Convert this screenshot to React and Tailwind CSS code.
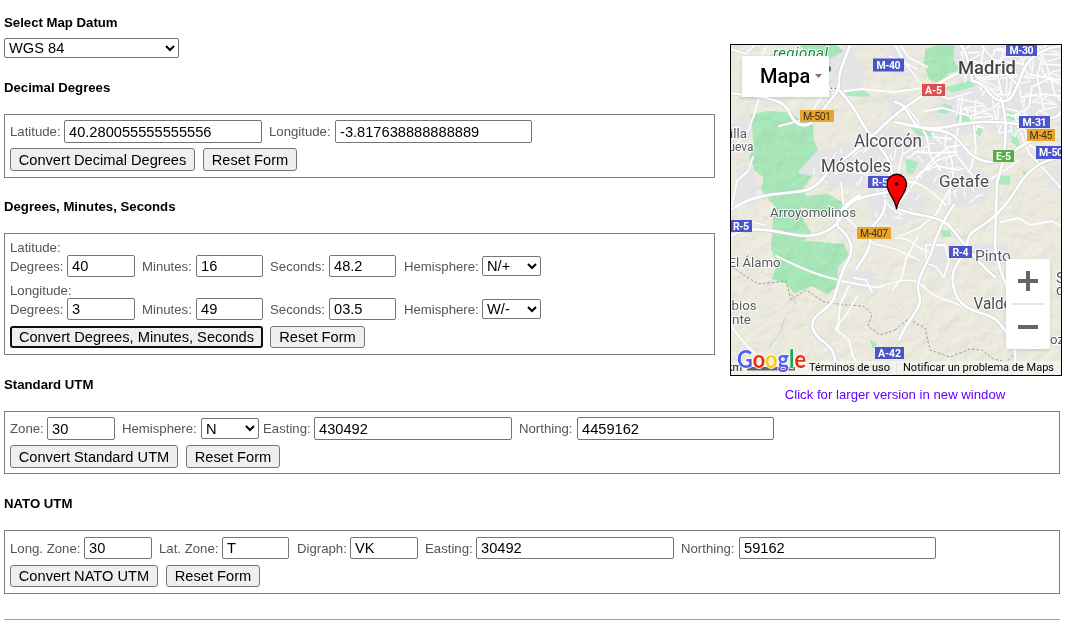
import React from "react";

const Heading = ({ children, className }) => (
  <h3 className={`text-[13.2px] leading-4 font-bold text-black ${className}`}>{children}</h3>
);

const Label = ({ children, className }) => (
  <label className={`shrink-0 whitespace-nowrap text-[13.2px] text-[#555555] ${className}`}>{children}</label>
);

const Field = ({ value, className }) => (
  <input
    defaultValue={value}
    className={`shrink-0 rounded-[2px] border border-[#767676] bg-white px-1 text-[14.65px] leading-4 text-black outline-none ${className}`}
  />
);

const Select = ({ value, className }) => (
  <select
    defaultValue={value}
    className={`shrink-0 rounded-[2px] border border-[#767676] bg-white text-[14.65px] leading-4 text-black outline-none ${className}`}
  >
    <option>{value}</option>
  </select>
);

const Button = ({ children, className }) => (
  <button className={`flex items-center justify-center whitespace-nowrap rounded-[3px] bg-[#efefef] text-[14.65px] leading-4 text-black ${className}`}>
    {children}
  </button>
);

const plain = "border border-[#767676]";

const urban = [
  "M956 45H1061V112L1040 118 1032 132 1012 138 985 128 965 134 945 126 930 112 950 92 965 75 955 60Z",
  "M858 135 880 128 908 134 922 148 912 162 880 160 860 152Z",
  "M818 152 850 146 880 160 888 175 870 186 840 186 820 176 800 172Z",
  "M915 130 945 128 960 142 968 165 955 185 930 190 912 172Z",
  "M870 192 900 185 925 198 918 215 900 225 880 222 868 208Z",
  "M940 170 970 168 995 180 980 202 955 206 940 190Z",
  "M892 48 905 55 915 68 900 76 885 64Z",
  "M830 60 850 50 864 75 856 92 838 96Z",
  "M925 245 942 243 950 262 945 276 928 265Z",
  "M845 280 870 270 876 286 860 293Z",
  "M738 170 752 165 756 200 738 205Z",
  "M1045 170 1061 164 1061 190 1050 186Z",
  "M975 245 1005 246 1005 262 990 264Z",
  "M735 120 750 117 750 135 735 138Z",
  "M888 100 905 96 908 110 893 115Z",
];

const parks = [
  "M750 116 767 112 788 113 802 122 812 125 813 140 819 155 813 173 803 187 805 197 828 195 842 203 846 213 825 216 800 205 803 222 810 232 803 242 822 243 843 245 848 255 837 267 837 285 828 293 812 285 795 292 787 283 773 278 778 265 772 248 773 235 775 205 762 190 765 177 755 170 750 157 755 147 753 127Z",
  "M926 50 940 45 958 45 966 56 961 68 948 73 941 83 930 79 925 63Z",
  "M800 45 836 45 846 57 830 60 815 57Z",
  "M848 90 865 91 870 96 856 96 846 95Z",
  "M945 88 970 81 974 86 953 92Z",
  "M975 125 982 130 980 136 974 132Z",
  "M958 115 970 114 974 121 957 121Z",
  "M1012 128 1019 142 1020 148 1012 142Z",
  "M910 126 925 127 935 136 918 135Z",
  "M1002 111 1016 114 1015 120 1003 117Z",
  "M906 159 918 163 912 174 907 172Z",
  "M941 230 950 231 951 236 943 237Z",
  "M1000 176 1010 176 1009 184 999 184Z",
  "M1023 171 1029 173 1025 178Z",
  "M870 340 877 344 873 348Z",
  "M944 104 952 107 947 113 938 112Z",
  "M826 65 831 68 828 72Z",
];

const major = [
  "M731 93C748 96 766 96 779 102S788 119 799 124 818 117 826 106 840 91 839 81 845 60 850 45",
  "M839 90C858 110 859 120 870 135S890 157 892 172 893 188 908 188",
  "M731 210C748 197 770 194 795 192S822 176 832 168 860 148 884 125 917 101 930 90 950 77 964 70",
  "M731 236C762 218 796 244 822 233S838 211 852 202 883 195 895 190",
  "M860 195C838 208 836 218 838 227 852 237 854 250 848 260S838 285 834 298 808 314 813 329 832 340 835 360 827 372 825 375",
  "M895 122C912 126 920 128 935 128S963 121 992 122 1020 127 1040 121 1055 119 1061 112",
  "M895 102C908 104 908 119 918 126S943 127 954 136 967 155 981 160 1000 161 1017 149 1041 139 1050 136",
  "M961 45C969 57 970 68 972 81 989 83 986 96 998 100S1013 96 1018 84 1025 62 1036 55 1053 47 1061 46",
  "M1001 98C1008 120 1007 155 997 182L995 245C998 278 1015 290 1014 331L1016 375",
  "M1061 158C1044 159 1033 167 1024 178S1009 205 990 220 970 229 967 245 950 264 953 284 967 309 984 314 1001 328 1013 340",
  "M895 208C922 219 940 213 953 230S980 265 995 277",
  "M954 205C943 220 936 236 932 250S914 280 919 294 908 317 899 340",
  "M885 200C888 218 867 225 870 236S862 259 856 270",
];

const minor = [
  "M731 150 748 131 754 115 760 95M731 49 745 54 755 45M767 45 762 55M822 96 807 119 779 126M832 93 861 89 894 92 930 87",
  "M776 256C795 265 815 276 852 283S872 288 895 282 920 285 931 293 955 300 974 312",
  "M835 170 861 173 880 180M841 183 845 216 863 234 875 244 895 249 919 260",
  "M731 209 737 181 748 171 753 157M731 326 746 345 758 357",
  "M895 184C914 175 931 190 946 205M898 174 902 155 918 145M898 205 919 176 934 158 949 147 967 144",
  "M899 236 918 229 936 214 949 190M895 238C913 236 916 251 931 252",
  "M891 171C878 190 883 207 902 214M905 105 917 120 927 137 930 155 940 170",
  "M947 129 945 145 952 161 953 177M958 129 954 151 963 164 973 176 988 182",
  "M924 111 943 108 970 116 993 108 1000 102M928 88 948 99 972 92",
  "M976 100 974 124 976 150 970 170M962 98 960 123M1021 133 1029 153 1061 188",
  "M1018 127 1015 115 1029 107 1032 87 1048 79 1061 83",
  "M1018 47 1027 74 1061 80M1035 45 1046 63 1055 94 1061 101M1022 97 1043 94 1061 96",
  "M982 46 1000 67 1018 85M963 68 994 60 1022 64M980 78 1007 74 1033 78",
  "M984 47 978 78 1000 98M1007 45 996 69 1002 96M1045 45 1037 77 1044 110",
  "M955 155 938 160 916 177M951 178 949 204M1001 222 1018 218 1030 225 1052 221 1061 226",
  "M893 290 902 277 906 259 918 236M740 228 752 222 764 225M835 329 846 315 857 297M835 329 849 340 853 357 863 369",
  "M849 286 840 305 838 330M1019 160 1007 169 991 179M1041 152 1029 145 1024 128",
  "M926 245 945 245 949 261 944 277 936 267 926 263ZM854 278 866 280 872 292",
  "M930 126 934 137 951 139M915 152 934 153 957 152M920 172 937 166 960 170",
  "M889 56 904 62 924 87M895 45 905 63 917 69M901 45 908 57 927 67",
];

const streets = Array.from({ length: 95 }, (_, i) => {
  const x = 956 + ((i * 37) % 108);
  const y = 42 + ((i * 53) % 103);
  const dx = 6 + ((i * 7) % 15);
  const dy = ((i * 11) % 25) - 12;
  return i % 3 ? `M${x} ${y}l${dx} ${dy / 2} ${dx / 2} ${dy / 3}` : `M${x} ${y}l${dy / 3} ${dx} ${dy / 4} ${dx / 2}`;
}).join("");

const suburbStreets = Array.from({ length: 120 }, (_, i) => {
  const x = 810 + ((i * 47) % 168);
  const y = 128 + ((i * 31) % 94);
  const dx = 5 + ((i * 5) % 9);
  const dy = ((i * 13) % 19) - 9;
  return i % 2 ? `M${x} ${y}l${dx} ${dy}` : `M${x} ${y}l${dy / 2} ${dx}`;
}).join("");

const shields = [
  [873, 58.5, 31, 13, "M-40", "#4a55cb", "#fff", 24],
  [1006, 44, 31, 12, "M-30", "#4a55cb", "#fff", 24],
  [922, 84, 23, 12, "A-5", "#dc4f51", "#fff", 17],
  [800, 110, 34, 12, "M-501", "#e7a52c", "#3d3520", 28],
  [1019, 116, 31, 12, "M-31", "#4a55cb", "#fff", 24],
  [1027, 129, 28, 12, "M-45", "#e7a52c", "#3d3520", 23],
  [1036, 146, 33, 13, "M-50", "#4a55cb", "#fff", 24],
  [993, 150, 21, 12, "E-5", "#56ad42", "#fff", 15],
  [868, 176, 24, 12, "R-5", "#4a55cb", "#fff", 16],
  [730, 220, 22, 12, "R-5", "#4a55cb", "#fff", 16],
  [857, 227, 34, 12, "M-407", "#e7a52c", "#3d3520", 28],
  [949, 246, 23, 12, "R-4", "#4a55cb", "#fff", 16],
  [875, 347, 29, 12, "A-42", "#4a55cb", "#fff", 23],
];

const places = [
  [958, 73.5, 58, "Madrid", 19, 500, "#444"],
  [854, 146.5, 68, "Alcorcón", 17.5, 400, "#4b4b50"],
  [821, 171.5, 70, "Móstoles", 17.5, 400, "#4b4b50"],
  [939, 187, 50, "Getafe", 17, 400, "#4b4b50"],
  [770, 217, 86, "Arroyomolinos", 13, 400, "#5b5c62"],
  [728.5, 267, 52, "El Álamo", 13, 400, "#5b5c62"],
  [975, 261, 36, "Pinto", 15.5, 400, "#5b5c62"],
  [973.5, 309, 74, "Valdemoro", 16, 400, "#4b4b50"],
  [730, 138, 17, "illa", 13, 400, "#5b5c62"],
  [728.5, 151, 25, "ueva", 13, 400, "#5b5c62"],
  [731.5, 310, 25, "bios", 13, 400, "#5b5c62"],
  [732, 323.5, 19, "nte", 13, 400, "#5b5c62"],
  [1056, 283, 9, "S", 14, 400, "#5b5c62"],
  [1056, 295, 8, "d", 14, 400, "#5b5c62"],
  [1050, 344, 14, "oz", 13, 400, "#5b5c62"],
];

const MapDrawing = () => (
  <svg viewBox="731 45 330 330" className="block h-[330px] w-[330px]" fontFamily="Roboto, sans-serif">
    <defs>
      <filter id="relief" x="0" y="0" width="100%" height="100%" colorInterpolationFilters="sRGB">
        <feTurbulence type="fractalNoise" baseFrequency="0.06 0.08" numOctaves="4" seed="6" />
        <feDiffuseLighting surfaceScale="2.2" lightingColor="#fffdf2">
          <feDistantLight azimuth="225" elevation="62" />
        </feDiffuseLighting>
      </filter>
      <clipPath id="townArea">
        {urban.slice(1, 6).map((d) => <path key={d} d={d} />)}
      </clipPath>
      <clipPath id="cityArea"><path d={urban[0]} /></clipPath>
    </defs>
    <rect x="731" y="45" width="330" height="330" fill="#efeee3" />
    <g fill="#aaeabc" stroke="#aaeabc" strokeWidth="2" strokeLinejoin="round">
      {parks.slice(0, 3).map((d) => <path key={d} d={d} />)}
    </g>
    <rect x="731" y="45" width="330" height="330" filter="url(#relief)" opacity="0.15" className="mix-blend-multiply" />
    <g fill="#e4e4e6" stroke="#e4e4e6" strokeWidth="3" strokeLinejoin="round">
      {urban.map((d) => <path key={d} d={d} />)}
    </g>
    <g fill="#aaeabc" stroke="#aaeabc" strokeLinejoin="round">
      {parks.slice(3).map((d) => <path key={d} d={d} />)}
    </g>
    <g fill="none" stroke="#9a9a93" strokeWidth="1" strokeDasharray="2.5 2">
      <path d="M732 267 744 275 758 284 786 281 791 300 806 290 824 302 845 305 863 306 872 314 868 326 880 335 895 330M895 330 908 319 925 328 930 350 950 357 970 349 982 350 993 359 1007 362 1015 352" />
    </g>
    <path d="M785 317 781 331 769 348M791 293 796 304" fill="none" stroke="#c8cfdb" />
    <g fill="none" stroke="#fff">
      <path d={streets} strokeWidth="1.3" clipPath="url(#cityArea)" />
      <path d={suburbStreets} strokeWidth="1.1" clipPath="url(#townArea)" />
    </g>
    <g fill="none" strokeLinejoin="round" strokeLinecap="round">
      {minor.map((d) => <path key={d} d={d} stroke="#dcdce0" strokeWidth="2.5" />)}
      {minor.map((d) => <path key={d} d={d} stroke="#fff" strokeWidth="1.8" />)}
      {major.map((d) => <path key={d} d={d} stroke="#d0d1da" strokeWidth="4" />)}
      {major.map((d) => <path key={d} d={d} stroke="#fff" strokeWidth="2.7" />)}
    </g>
    <g fill="#168b43" stroke="#fff" strokeWidth="2" paintOrder="stroke" fontStyle="italic">
      <text x="773" y="58" fontSize="15" textLength="55">regional</text>
      <text x="827" y="89" fontSize="14">...</text>
      <circle cx="828" cy="69" r="3" stroke="none" />
    </g>
    {shields.map(([x, y, w, h, t, bg, fg, tw]) => (
      <g key={t + x}>
        <rect x={x} y={y} width={w} height={h} fill={bg} />
        <text
          x={x + (t === "M-50" ? 3 : (w - tw) / 2)}
          y={y + h / 2 + 3.7}
          textLength={tw}
          fill={fg}
          fontSize="10.5"
          fontWeight={fg === "#fff" ? 700 : 400}
        >{t}</text>
      </g>
    ))}
    {places.map(([x, y, w, t, size, weight, fill]) => (
      <text
        key={t}
        x={x}
        y={y}
        textLength={w}
        lengthAdjust="spacingAndGlyphs"
        fontSize={size}
        fontWeight={weight}
        fill={fill}
        stroke="#fff"
        strokeOpacity="0.85"
        strokeWidth="2.2"
        strokeLinejoin="round"
        paintOrder="stroke"
      >{t}</text>
    ))}
    <path d="M896.5 209.5C896 199 887 194 887 184A9.7 9.7 0 0 1 906.5 184C906.5 194 897 199 896.5 209.5Z" fill="#fb0000" stroke="#180000" strokeWidth="1.3" />
    <circle cx="896.5" cy="184" r="1.8" fill="#180000" />
    <text x="849" y="374" fontSize="14" fill="#a7a7a5" textLength="43">Illescas</text>
    <rect x="731" y="361" width="330" height="14" fill="#f5f5f1" opacity="0.75" />
    <path d="M747 367v3.5h48V367" fill="#666" />
    <path d="M896.5 362v13" stroke="#e4e4e1" />
    <text x="727" y="371" fontSize="11" fill="#111">km</text>
    <text x="737" y="367.5" fontFamily="Lato, sans-serif" fontSize="24" fontWeight="700" textLength="69" lengthAdjust="spacingAndGlyphs" stroke="#fff" strokeWidth="1.6" paintOrder="stroke">
      <tspan fill="#5361f3">G</tspan><tspan fill="#ee2b16">o</tspan><tspan fill="#f4cd13">o</tspan><tspan fill="#5361f3">g</tspan><tspan fill="#16a84b">l</tspan><tspan fill="#ee2b16">e</tspan>
    </text>
    <text x="809" y="371" fontSize="11" fill="#000" textLength="81">Términos de uso</text>
    <text x="903" y="371" fontSize="11" fill="#000" textLength="151">Notificar un problema de Maps</text>
  </svg>
);

const MapPanel = () => (
  <div className="mt-11 ml-[15px] w-[332px] shrink-0">
    <div className="relative overflow-hidden border border-black">
      <MapDrawing />
      <button className="absolute top-[11px] left-[11px] flex h-[41px] w-[87px] items-center bg-white pb-0.5 pl-[18px] font-[Roboto,sans-serif] text-[20px] font-medium text-black shadow-[0_1px_3px_rgba(0,0,0,0.15)]">
        Mapa
        <svg width="7" height="4" viewBox="0 0 7 4" className="ml-[5px]"><path d="M0 0h7L3.5 4z" fill="#777" /></svg>
      </button>
      <div className="absolute top-[214px] left-[275px] flex h-[90px] w-11 flex-col items-center rounded-[2px] bg-white shadow-[0_1px_3px_rgba(0,0,0,0.15)]">
        <svg width="20" height="20" viewBox="0 0 20 20" className="mt-3"><path d="M0 8h8V0h4v8h8v4h-8v8H8v-8H0z" fill="#666" /></svg>
        <div className="mt-3 h-0.5 w-[33px] bg-[#e6e6e6]" />
        <svg width="20" height="4" viewBox="0 0 20 4" className="mt-5"><path d="M0 0h20v4H0z" fill="#666" /></svg>
      </div>
    </div>
    <a className="mt-[11px] mr-0.5 block text-center text-[13.2px] leading-4 text-[#6600ff]">Click for larger version in new window</a>
  </div>
);

const DmsRow = ({ d, m, s, h }) => (
  <div className="flex h-[22px] items-center">
    <Label className="w-[57px] pt-0.5 leading-4">Degrees:</Label>
    <Field value={d} className="h-[22px] w-[68px]" />
    <Label className="ml-[7px] w-[54px] pt-0.5 leading-4">Minutes:</Label>
    <Field value={m} className="h-[22px] w-[67px]" />
    <Label className="ml-[7px] w-[59px] pt-0.5 leading-4">Seconds:</Label>
    <Field value={s} className="h-[22px] w-[67px]" />
    <Label className="ml-2 w-[78px] pt-0.5 leading-4">Hemisphere:</Label>
    <Select value={h} className="h-5 w-[59px]" />
  </div>
);

export default function App() {
  return (
    <main className="h-[624px] w-[1068px] overflow-hidden bg-white pl-1 font-['Liberation_Sans',Arial,sans-serif]">
      <div className="flex h-[411px]">
        <div className="w-[711px] shrink-0">
          <Heading className="h-[38px] pt-[15px]">Select Map Datum</Heading>
          <Select value="WGS 84" className="block h-5 w-[175px]" />
          <Heading className="h-14 pt-[22px]">Decimal Degrees</Heading>
          <section className="h-16 border border-[#808080] px-[5px] pt-[5px]">
            <div className="flex items-center">
              <Label className="w-[54px]">Latitude:</Label>
              <Field value="40.280055555555556" className="h-[23px] w-[198px]" />
              <Label className="ml-[7px] w-[66px]">Longitude:</Label>
              <Field value="-3.817638888888889" className="h-[23px] w-[197px]" />
            </div>
            <div className="mt-[5px] flex gap-2">
              <Button className={`${plain} h-[23px] w-[185px]`}>Convert Decimal Degrees</Button>
              <Button className={`${plain} h-[23px] w-[94px]`}>Reset Form</Button>
            </div>
          </section>
          <Heading className="h-[55px] pt-[21px]">Degrees, Minutes, Seconds</Heading>
          <section className="h-[122px] border border-[#808080] px-[5px] pt-1.5">
            <Label className="block h-[15px] leading-4">Latitude:</Label>
            <DmsRow d="40" m="16" s="48.2" h="N/+" />
            <Label className="mt-1.5 block h-[15px] leading-4">Longitude:</Label>
            <DmsRow d="3" m="49" s="03.5" h="W/-" />
            <div className="mt-1.5 flex gap-[7px]">
              <Button className="h-[22px] w-[253px] border-2 border-[#101010]">Convert Degrees, Minutes, Seconds</Button>
              <Button className={`${plain} h-[22px] w-[95px]`}>Reset Form</Button>
            </div>
          </section>
          <Heading className="h-14 pt-[22px]">Standard UTM</Heading>
        </div>
        <MapPanel />
      </div>
      <div className="w-[1056px]">
        <section className="h-[63px] border border-[#808080] px-[5px] pt-[5px]">
          <div className="flex items-center">
            <Label className="w-[37px]">Zone:</Label>
            <Field value="30" className="h-[23px] w-[68px]" />
            <Label className="ml-[7px] w-[79px]">Hemisphere:</Label>
            <Select value="N" className="h-[21px] w-[58px]" />
            <Label className="ml-1 w-[51px]">Easting:</Label>
            <Field value="430492" className="h-[23px] w-[198px]" />
            <Label className="ml-[7px] w-[58px]">Northing:</Label>
            <Field value="4459162" className="h-[23px] w-[197px]" />
          </div>
          <div className="mt-[5px] flex gap-2">
            <Button className={`${plain} h-[23px] w-[168px]`}>Convert Standard UTM</Button>
            <Button className={`${plain} h-[23px] w-[94px]`}>Reset Form</Button>
          </div>
        </section>
        <Heading className="h-14 pt-[22px]">NATO UTM</Heading>
        <section className="h-16 border border-[#808080] px-[5px] pt-1.5">
          <div className="flex h-[22px] items-center">
            <Label className="w-[74px] pt-0.5 leading-4">Long. Zone:</Label>
            <Field value="30" className="h-[22px] w-[68px]" />
            <Label className="ml-[7px] w-[63px] pt-0.5 leading-4">Lat. Zone:</Label>
            <Field value="T" className="h-[22px] w-[67px]" />
            <Label className="ml-2 w-[53px] pt-0.5 leading-4">Digraph:</Label>
            <Field value="VK" className="h-[22px] w-[68px]" />
            <Label className="ml-[7px] w-[51px] pt-0.5 leading-4">Easting:</Label>
            <Field value="30492" className="h-[22px] w-[198px]" />
            <Label className="ml-[7px] w-[58px] pt-0.5 leading-4">Northing:</Label>
            <Field value="59162" className="h-[22px] w-[197px]" />
          </div>
          <div className="mt-1.5 flex gap-2">
            <Button className={`${plain} h-[22px] w-[148px]`}>Convert NATO UTM</Button>
            <Button className={`${plain} h-[22px] w-[94px]`}>Reset Form</Button>
          </div>
        </section>
        <hr className="mt-[25px] border-t border-[#b5b51e]" />
      </div>
    </main>
  );
}
